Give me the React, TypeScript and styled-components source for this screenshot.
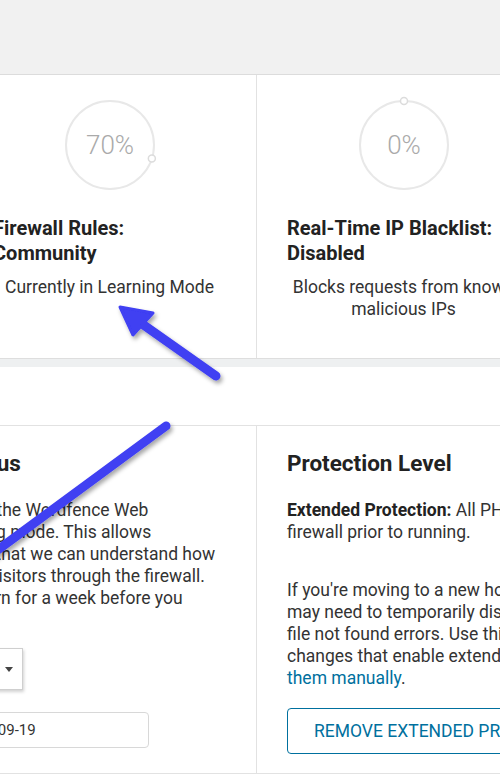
import React from 'react';
import styled, { createGlobalStyle } from 'styled-components';

const GlobalStyle = createGlobalStyle`
  html, body {
    margin: 0;
    padding: 0;
    overflow: hidden;
    background: #fff;
  }

  body {
    font-family: Roboto, "Liberation Sans", Arial, sans-serif;
    color: #333;
  }
`;

const Page = styled.div`
  position: relative;
  width: 500px;
  height: 775px;
  overflow: hidden;
  background: #fff;
`;

const TopBand = styled.div`
  height: 74px;
  background: #f1f1f1;
  border-bottom: 1px solid #dcdcdc;
`;

const StatusRow = styled.div`
  display: flex;
  margin-left: -37px;
  background: #fff;
  border-bottom: 1px solid #dedede;
`;

const StatusCard = styled.div`
  flex: 0 0 294px;
  box-sizing: border-box;
  height: 283px;
  padding: 20px 30px 0;
  border-right: 1px solid #e2e2e2;
  display: flex;
  flex-direction: column;
`;

const GaugeSvg = styled.svg`
  display: block;
  width: 100px;
  height: 100px;
  margin: 0 auto;
`;

const StatusTitle = styled.h4`
  margin: 21px 0 0;
  font-size: 20px;
  line-height: 25px;
  font-weight: 700;
  color: #222;
  white-space: nowrap;
`;

const StatusText = styled.p`
  margin: 10px 0 0;
  font-size: 17.5px;
  line-height: 22px;
  text-align: center;
  color: #333;
`;

const SectionGap = styled.div`
  height: 8px;
  background: #eef0f1;
`;

const SectionHead = styled.div`
  height: 58px;
  background: #fff;
  border-bottom: 1px solid #e2e2e2;
`;

const OptionsRow = styled.div`
  display: flex;
  margin-left: -329px;
  background: #fff;
`;

const OptionCard = styled.div<{ $width: number }>`
  flex: 0 0 ${(p) => p.$width}px;
  box-sizing: border-box;
  height: 348px;
  padding: 23px 30px 0;
  border-right: 1px solid #e2e2e2;
  border-bottom: 1px solid #e2e2e2;
`;

const OptionTitle = styled.h3`
  margin: 0;
  font-size: 22.5px;
  line-height: 28px;
  font-weight: 700;
  color: #222;
  white-space: nowrap;
`;

const OptionText = styled.p<{ $gap?: number }>`
  margin: ${(p) => p.$gap ?? 22}px 0 0;
  font-size: 17.5px;
  line-height: 22px;
  color: #333;
  white-space: nowrap;

  strong {
    font-weight: 700;
    color: #222;
  }

  a {
    color: #00709e;
    text-decoration: none;
  }
`;

const ModeSelect = styled.div`
  margin-top: 17px;
  width: 322px;
  height: 42px;
  box-sizing: border-box;
  padding: 0 9px 0 12px;
  display: flex;
  align-items: center;
  justify-content: space-between;
  border: 1px solid #cfcfcf;
  background: #fff;
  box-shadow: 1px 2px 3px rgba(0, 0, 0, 0.18);
  font-size: 16px;
  color: #333;
`;

const Caret = styled.span`
  width: 0;
  height: 0;
  border-left: 4px solid transparent;
  border-right: 4px solid transparent;
  border-top: 5px solid #444;
`;

const DateRow = styled.div`
  margin-top: 22px;
  display: flex;
  align-items: center;
  gap: 12px;
`;

const DateLabel = styled.label`
  flex: 0 0 236px;
  font-size: 16px;
  color: #333;
`;

const DateField = styled.div`
  width: 200px;
  height: 36px;
  box-sizing: border-box;
  padding: 0 10px;
  display: flex;
  align-items: center;
  border: 1px solid #d8d8d8;
  border-radius: 4px;
  font-size: 15px;
  color: #333;
`;

const OutlineButton = styled.button`
  margin-top: 19px;
  height: 46px;
  padding: 0 26px;
  border: 1px solid #00709e;
  border-radius: 4px;
  background: #fff;
  color: #00709e;
  font-family: inherit;
  font-size: 17.5px;
  text-transform: uppercase;
  white-space: nowrap;
`;

const Annotations = styled.svg`
  position: absolute;
  top: 0;
  left: 0;
  width: 500px;
  height: 775px;
  pointer-events: none;
`;

interface GaugeProps {
  percent: number;
}

const Gauge: React.FC<GaugeProps> = ({ percent }: GaugeProps) => {
  // knob travels counter-clockwise from the top
  const a = (-2 * Math.PI * percent) / 100;
  const kx = 50 + 44 * Math.sin(a);
  const ky = 50 - 44 * Math.cos(a);

  return (
    <GaugeSvg viewBox="0 0 100 100">
      <circle cx="50" cy="50" r="44" fill="none" stroke="#e8e8e8" strokeWidth="2" />
      <circle cx={kx} cy={ky} r="3.5" fill="#fff" stroke="#dcdcdc" strokeWidth="1.5" />
      <text
        x="50"
        y="59"
        textAnchor="middle"
        fontFamily="Roboto, 'Liberation Sans', sans-serif"
        fontWeight="300"
        fontSize="26"
        fill="#aaa"
      >
        {percent}%
      </text>
    </GaugeSvg>
  );
};

const App: React.FC = () => (
  <Page>
    <GlobalStyle />
    <TopBand />

    <StatusRow>
      <StatusCard>
        <Gauge percent={70} />
        <StatusTitle>
          Firewall Rules:
          <br />
          Community
        </StatusTitle>
        <StatusText>Currently in Learning Mode</StatusText>
      </StatusCard>
      <StatusCard>
        <Gauge percent={0} />
        <StatusTitle>
          Real-Time IP Blacklist:
          <br />
          Disabled
        </StatusTitle>
        <StatusText>Blocks requests from known malicious IPs</StatusText>
      </StatusCard>
    </StatusRow>

    <SectionGap />
    <SectionHead />

    <OptionsRow>
      <OptionCard $width={586}>
        <OptionTitle>Web Application Firewall Status</OptionTitle>
        <OptionText>
          After you initially install and configure the Wordfence Web
          <br />
          Application Firewall, it starts in learning mode. This allows
          <br />
          Wordfence to learn about your site so that we can understand how
          <br />
          to protect it and how to allow normal visitors through the firewall.
          <br />
          We recommend you let Wordfence learn for a week before you
          <br />
          enable the firewall.
        </OptionText>
        <ModeSelect>
          <span>Learning Mode</span>
          <Caret />
        </ModeSelect>
        <DateRow>
          <DateLabel>Automatically enable on</DateLabel>
          <DateField>2018-09-19</DateField>
        </DateRow>
      </OptionCard>
      <OptionCard $width={581}>
        <OptionTitle>Protection Level</OptionTitle>
        <OptionText>
          <strong>Extended Protection:</strong> All PHP requests will be processed by the
          <br />
          firewall prior to running.
        </OptionText>
        <OptionText $gap={36}>
          If you're moving to a new host or a new installation location, you
          <br />
          may need to temporarily disable extended protection to avoid any
          <br />
          file not found errors. Use this action to remove the configuration
          <br />
          changes that enable extended protection mode or you can remove
          <br />
          <a href="#">them manually</a>.
        </OptionText>
        <OutlineButton>Remove Extended Protection</OutlineButton>
      </OptionCard>
    </OptionsRow>

    <Annotations viewBox="0 0 500 775">
      <defs>
        <filter id="arrowShadow" x="-20%" y="-20%" width="140%" height="140%">
          <feDropShadow dx="2" dy="3" stdDeviation="2" floodColor="#000" floodOpacity="0.35" />
        </filter>
      </defs>
      <g filter="url(#arrowShadow)" fill="#3f3ff2" stroke="#3f3ff2">
        <line x1="216" y1="376" x2="138" y2="321" strokeWidth="9" strokeLinecap="round" />
        <polygon points="120,307 153,313 133,335" strokeWidth="3" strokeLinejoin="round" />
        <line x1="166" y1="426" x2="-20" y2="563" strokeWidth="9" strokeLinecap="round" />
      </g>
    </Annotations>
  </Page>
);

export default App;
